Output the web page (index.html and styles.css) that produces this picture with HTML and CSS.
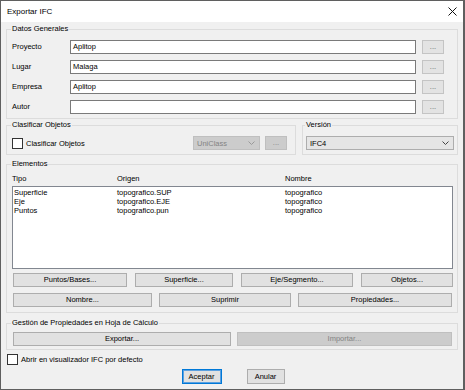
FILE: index.html
```html
<!DOCTYPE html>
<html lang="es">
<head>
<meta charset="utf-8">
<title>Exportar IFC</title>
<link rel="stylesheet" href="styles.css">
</head>
<body>
<div class="window">
  <div class="titlebar">
    <span class="title">Exportar IFC</span>
    <svg class="close" width="9" height="9" viewBox="0 0 9 9"><path d="M0.5 0.5 L8.5 8.5 M8.5 0.5 L0.5 8.5" stroke="#111" stroke-width="1" fill="none"/></svg>
  </div>
  <div class="content">
    <fieldset class="group general">
      <legend>Datos Generales</legend>
      <div class="form">
        <span class="lbl">Proyecto</span><div class="input">Aplitop</div><button class="btn dots">...</button>
        <span class="lbl">Lugar</span><div class="input">Malaga</div><button class="btn dots">...</button>
        <span class="lbl">Empresa</span><div class="input">Aplitop</div><button class="btn dots">...</button>
        <span class="lbl">Autor</span><div class="input"></div><button class="btn dots">...</button>
      </div>
    </fieldset>

    <div class="row2">
      <fieldset class="group classify">
        <legend>Clasificar Objetos</legend>
        <div class="classify-row">
          <span class="check"><span class="box"></span>Clasificar Objetos</span>
          <div class="combo disabled">UniClass<svg class="chev" width="7" height="4" viewBox="0 0 7 4"><path d="M0.5 0.5 L3.5 3.5 L6.5 0.5" stroke="#9a9a9a" fill="none"/></svg></div>
          <button class="btn disabled small">...</button>
        </div>
      </fieldset>
      <fieldset class="group version">
        <legend>Versión</legend>
        <div class="combo">IFC4<svg class="chev" width="7" height="4" viewBox="0 0 7 4"><path d="M0.5 0.5 L3.5 3.5 L6.5 0.5" stroke="#444" fill="none"/></svg></div>
      </fieldset>
    </div>

    <fieldset class="group elements">
      <legend>Elementos</legend>
      <div class="head cols">
        <span>Tipo</span><span>Origen</span><span>Nombre</span>
      </div>
      <div class="list">
        <div class="item cols2"><span>Superficie</span><span>topografico.SUP</span><span>topografico</span></div>
        <div class="item cols2"><span>Eje</span><span>topografico.EJE</span><span>topografico</span></div>
        <div class="item cols2"><span>Puntos</span><span>topografico.pun</span><span>topografico</span></div>
      </div>
      <div class="btnrow1">
        <button class="btn">Puntos/Bases...</button>
        <button class="btn">Superficie...</button>
        <button class="btn">Eje/Segmento...</button>
        <button class="btn">Objetos...</button>
      </div>
      <div class="btnrow2">
        <button class="btn">Nombre...</button>
        <button class="btn">Suprimir</button>
        <button class="btn">Propiedades...</button>
      </div>
    </fieldset>

    <fieldset class="group sheet">
      <legend>Gestión de Propiedades en Hoja de Cálculo</legend>
      <div class="sheet-row">
        <button class="btn">Exportar...</button>
        <button class="btn disabled">Importar...</button>
      </div>
    </fieldset>

    <span class="check open"><span class="box"></span>Abrir en visualizador IFC por defecto</span>

    <div class="footer">
      <button class="btn default">Aceptar</button>
      <button class="btn">Anular</button>
    </div>
  </div>
</div>
</body>
</html>
```

FILE: styles.css
```css
* { box-sizing: border-box; }
html, body { margin: 0; padding: 0; background: #f0f0f0; }
body {
  font-family: "Liberation Sans", Arial, sans-serif;
  font-size: 7.5px;
  color: #000;
}
.window {
  width: 465px;
  height: 390px;
  border: 1px solid #5f5f5f;
  border-right-width: 2px;
  background: #f0f0f0;
  display: flex;
  flex-direction: column;
}
.titlebar {
  height: 21px;
  background: #fff;
  display: flex;
  align-items: center;
  justify-content: space-between;
  padding: 0 6px 1px 6px;
}
.title { font-size: 8px; }
.group {
  margin: 0;
  min-width: 0;
  border: 1px solid #dcdcdc;
  padding: 0 13px 4px 5px;
}
.content {
  padding: 2px 5px 0 5px;
  display: flex;
  flex-direction: column;
}
.group legend {
  padding: 0 1px;
  margin-left: -1px;
  line-height: 10px;
  font-size: 7.5px;
}
.general { padding-top: 6px; }
.form {
  display: grid;
  grid-template-columns: 52px 1fr 22px;
  grid-auto-rows: 14px;
  column-gap: 6px;
  row-gap: 6px;
}
.lbl { line-height: 12px; padding-top: 1px; }
.input {
  background: #fff;
  border: 1px solid #7a7a7a;
  line-height: 12px;
  padding-left: 2px;
}
.btn {
  font-family: inherit;
  font-size: 7.5px;
  color: #000;
  background: #e1e1e1;
  border: 1px solid #adadad;
  height: 14px;
  padding: 0;
  margin: 0;
  line-height: 12px;
}
.btn.dots { color: #666; border-color: #c4c4c4; background: #e3e3e3; }
.btn.disabled { background: #cccccc; border-color: #bfbfbf; color: #838383; }
.row2 {
  margin-top: 1px;
  display: grid;
  grid-template-columns: 290px 1fr;
  column-gap: 6px;
}
.classify { padding: 6px 8px 4px 5px; }
.classify-row {
  display: flex;
  align-items: center;
  height: 14px;
}
.check { display: flex; align-items: center; gap: 3px; }
.box {
  width: 11px;
  height: 11px;
  background: #fff;
  border: 1px solid #333;
}
.classify-row .check { flex: 1; }
.combo {
  height: 14px;
  border: 1px solid #adadad;
  background: #e5e5e5;
  display: flex;
  align-items: center;
  justify-content: space-between;
  padding: 0 4px 0 3px;
}
.combo.disabled { background: #cccccc; border-color: #bfbfbf; color: #838383; width: 67px; margin-right: 5px; }
.btn.small { width: 22px; }
.version { padding: 6px 3px 4px 3px; }
.elements { margin-top: 4px; padding: 5px 4px 5px 5px; }
.cols, .cols2 { display: grid; }
.cols { grid-template-columns: 105px 168px 1fr; line-height: 10px; height: 10px; margin-bottom: 2px; }
.cols2 { grid-template-columns: 103px 168px 1fr; }
.list {
  height: 83px;
  background: #fff;
  border: 1px solid #828790;
  padding: 1px 0 0 1px;
}
.item { line-height: 9px; height: 9px; }
.btnrow1 {
  margin-top: 4px;
  padding: 0 0 0 1px;
  display: grid;
  grid-template-columns: 114px 98px 112px 92px;
  justify-content: space-between;
}
.btnrow2 {
  margin-top: 6px;
  padding: 0 1px 0 1px;
  display: grid;
  grid-template-columns: 139px 132px 154px;
  justify-content: space-between;
}
.sheet { margin-top: 5px; padding: 4px 5px 3px 5px; }
.sheet-row {
  padding-left: 1px;
  display: grid;
  grid-template-columns: 218px 1fr;
  column-gap: 6px;
}
.open { margin-top: 4px; margin-left: 1px; gap: 3px; height: 11px; }
.footer {
  margin-top: 4px;
  display: flex;
  justify-content: center;
  gap: 25px;
  padding-left: 2px;
}
.footer .btn { height: 15px; }
.footer .default { width: 40px; border: 1px solid #0078d7; box-shadow: inset 0 0 0 1px #5aa0e0; }
.footer .btn:last-child { width: 38px; }
```
